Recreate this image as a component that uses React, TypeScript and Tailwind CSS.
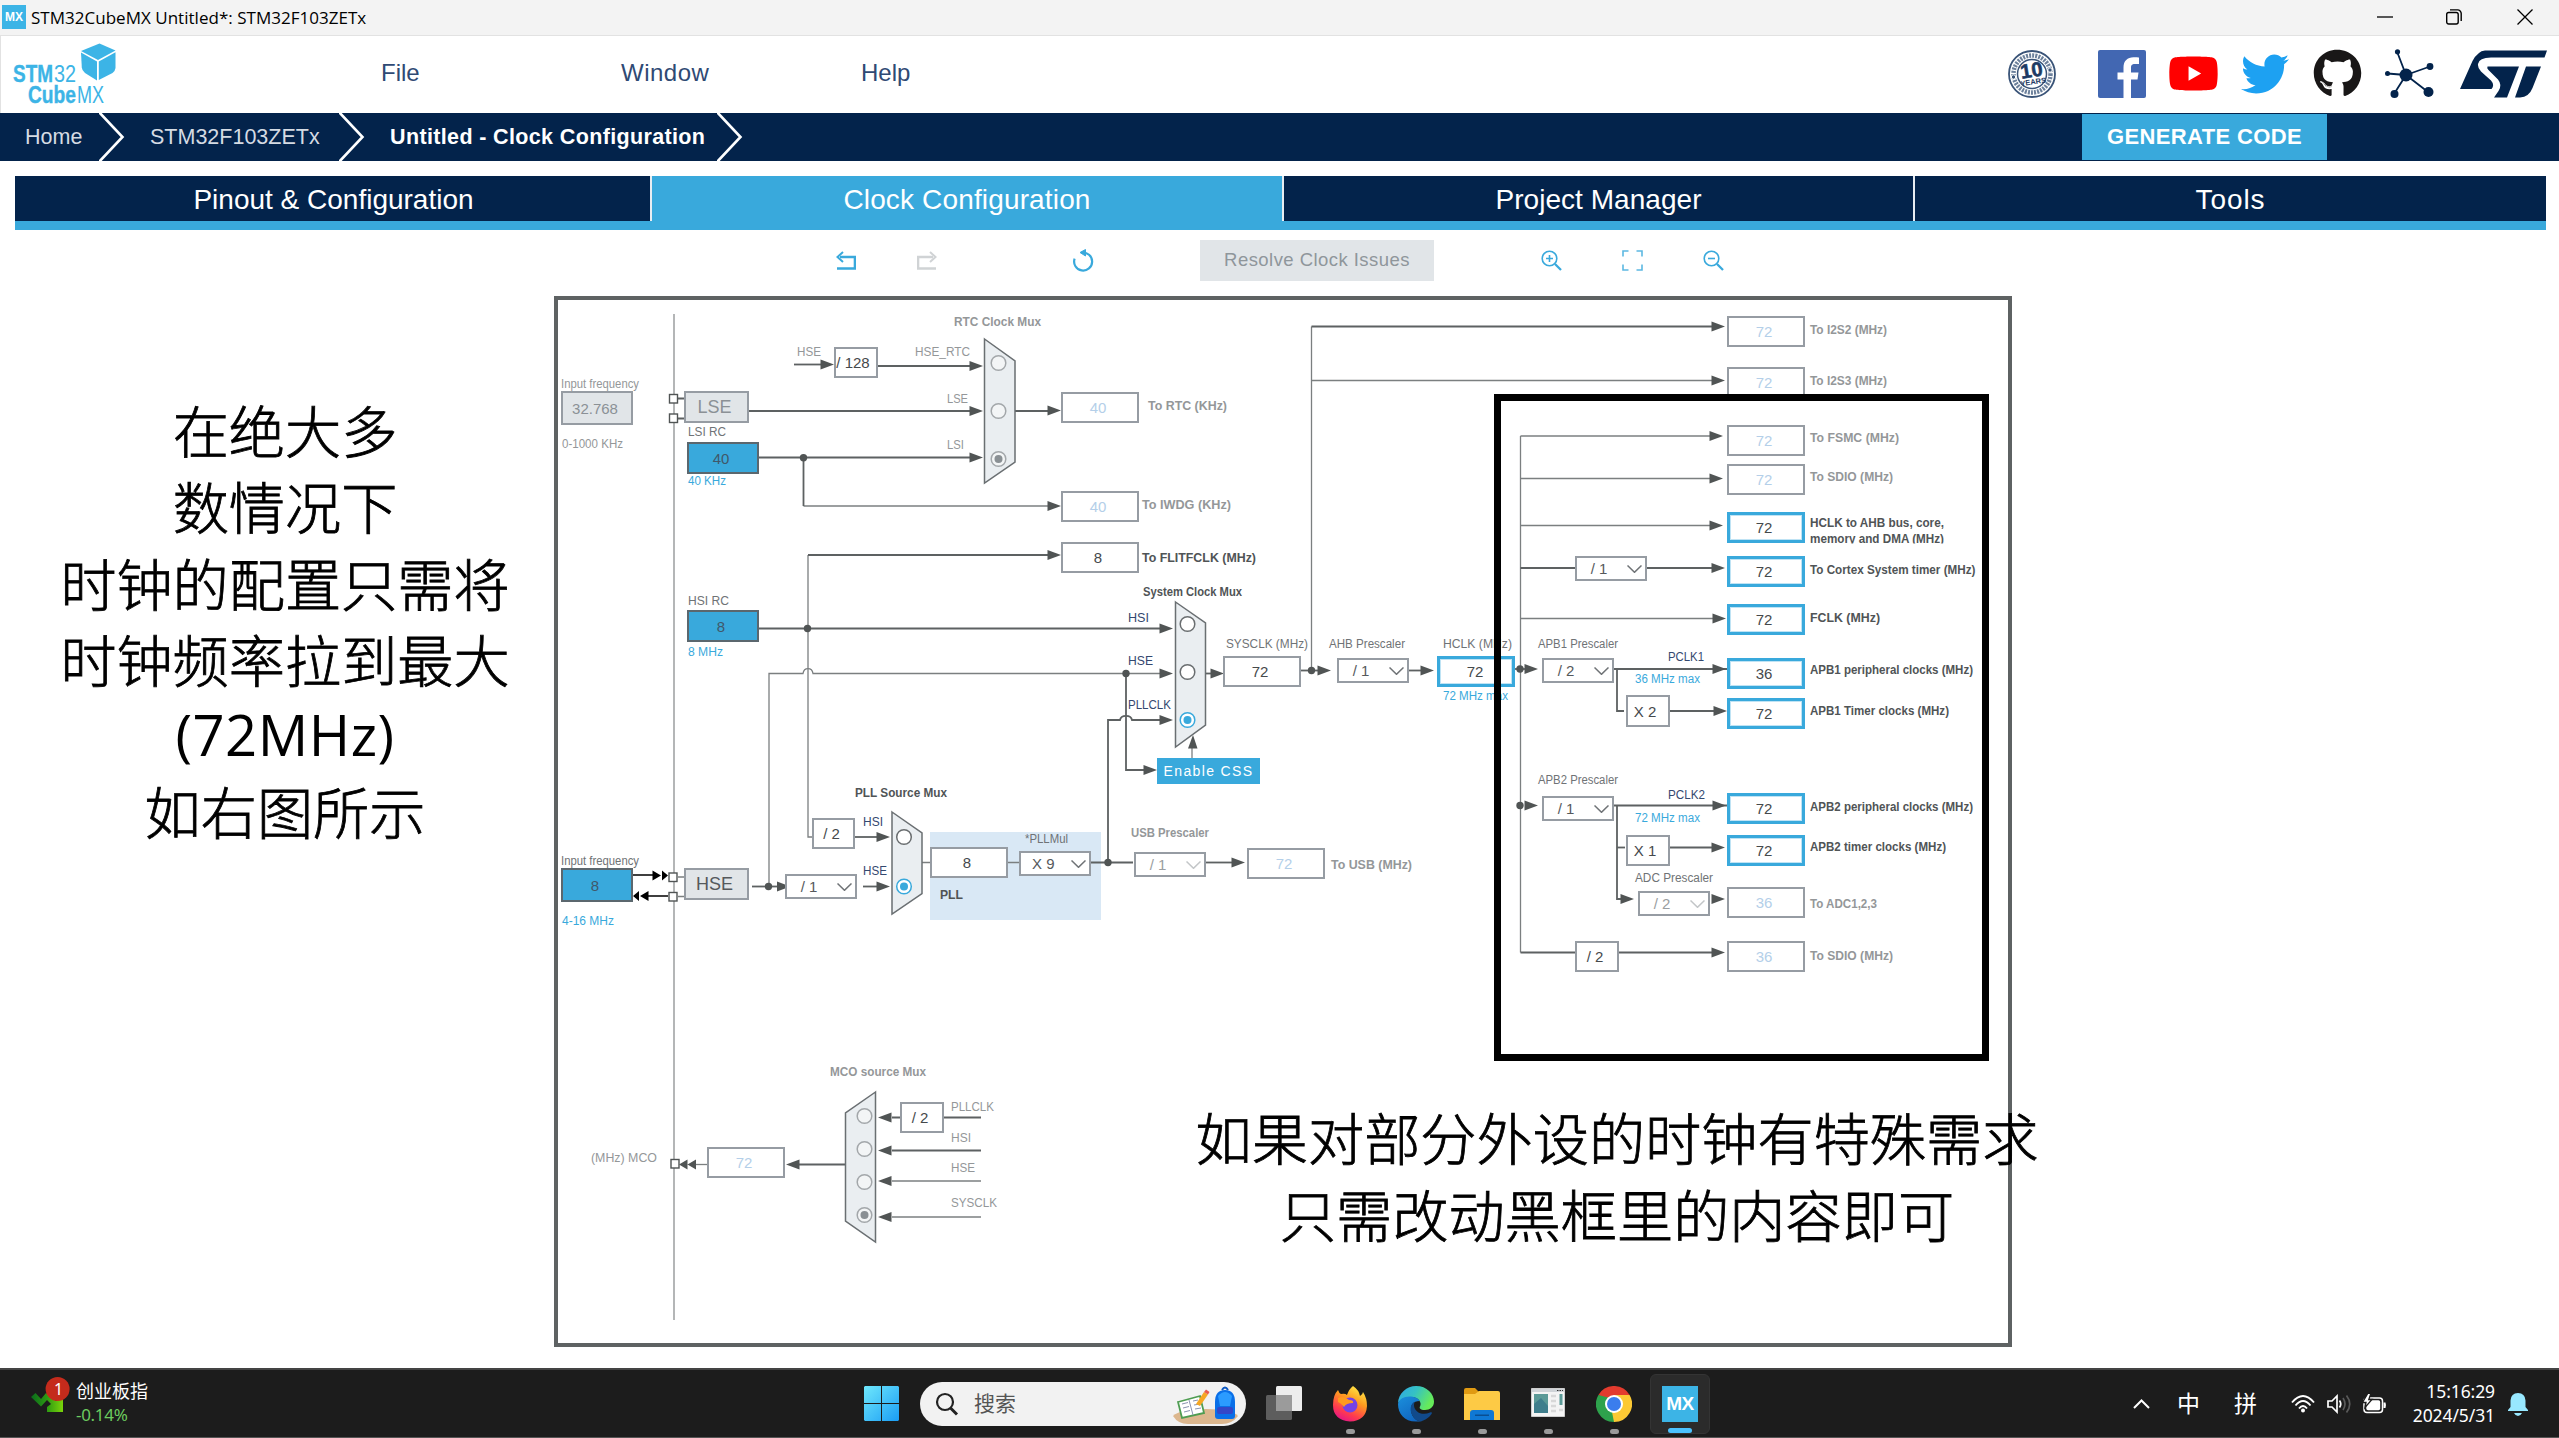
import React from "react";
import { FaGithub, FaTwitter, FaYoutube } from "react-icons/fa";

/* ------------------------------------------------------------------ */
/* Clock tree data (page coordinates, origin of the canvas below)      */
/* ------------------------------------------------------------------ */

const OX = 554;
const OY = 296;

type Tone = "dark" | "mid" | "grey" | "blue" | "navy";

const tones: Record<Tone, string> = {
  dark: "#505456",
  mid: "#6f7376",
  grey: "#949799",
  blue: "#39a9dc",
  navy: "#34486f",
};

type LabelDef = [text: string, x1: number, x2: number, baseline: number, tone: Tone, bold?: boolean];

const labels: LabelDef[] = [
  ["Input frequency", 561, 639, 388, "grey"],
  ["0-1000 KHz", 562, 623, 448, "grey"],
  ["LSI RC", 688, 726, 436, "mid"],
  ["40 KHz", 688, 726, 485, "blue"],
  ["RTC Clock Mux", 954, 1041, 326, "grey", true],
  ["HSE", 797, 821, 356, "grey"],
  ["HSE_RTC", 915, 970, 356, "grey"],
  ["LSE", 947, 968, 402.5, "grey"],
  ["LSI", 947, 964, 449, "grey"],
  ["To RTC (KHz)", 1148, 1227, 410, "grey", true],
  ["To IWDG (KHz)", 1142, 1231, 509, "grey", true],
  ["To FLITFCLK (MHz)", 1142, 1256, 561.5, "dark", true],
  ["HSI RC", 688, 729, 605, "mid"],
  ["8 MHz", 688, 723, 656, "blue"],
  ["System Clock Mux", 1143, 1242, 596, "dark", true],
  ["HSI", 1128, 1149, 621.5, "navy"],
  ["HSE", 1128, 1153, 665, "navy"],
  ["PLLCLK", 1128, 1171, 708.5, "navy"],
  ["SYSCLK (MHz)", 1226, 1308, 647.5, "mid"],
  ["AHB Prescaler", 1329, 1405, 647.5, "mid"],
  ["HCLK (MHz)", 1443, 1512, 647.5, "mid"],
  ["72 MHz max", 1443, 1508, 700, "blue"],
  ["USB Prescaler", 1131, 1209, 836.5, "grey", true],
  ["To USB (MHz)", 1331, 1412, 869, "grey", true],
  ["PLL Source Mux", 855, 947, 797, "dark", true],
  ["HSI", 863, 883, 825.5, "navy"],
  ["HSE", 863, 887, 875, "navy"],
  ["Input frequency", 561, 639, 865, "mid"],
  ["4-16 MHz", 562, 614, 925, "blue"],
  ["*PLLMul", 1025, 1068, 842.5, "mid"],
  ["PLL", 940, 963, 899, "dark", true],
  ["To I2S2 (MHz)", 1810, 1887, 334, "grey", true],
  ["To I2S3 (MHz)", 1810, 1887, 385, "grey", true],
  ["To FSMC (MHz)", 1810, 1899, 442, "grey", true],
  ["To SDIO (MHz)", 1810, 1893, 481, "grey", true],
  ["HCLK to AHB bus, core,", 1810, 1944, 527, "dark", true],
  ["To Cortex System timer (MHz)", 1810, 1975.5, 574, "dark", true],
  ["FCLK (MHz)", 1810, 1880, 622, "dark", true],
  ["APB1 Prescaler", 1538, 1618, 647.5, "mid"],
  ["PCLK1", 1668, 1704, 660.5, "navy"],
  ["36 MHz max", 1635, 1700, 683, "blue"],
  ["APB1 peripheral clocks (MHz)", 1810, 1973, 674, "dark", true],
  ["APB1 Timer clocks (MHz)", 1810, 1949, 714.5, "dark", true],
  ["APB2 Prescaler", 1538, 1618, 784, "mid"],
  ["PCLK2", 1668, 1705, 798.5, "navy"],
  ["72 MHz max", 1635, 1700, 821.5, "blue"],
  ["APB2 peripheral clocks (MHz)", 1810, 1973, 811, "dark", true],
  ["APB2 timer clocks (MHz)", 1810, 1946, 851, "dark", true],
  ["ADC Prescaler", 1635, 1713, 881.5, "mid"],
  ["To ADC1,2,3", 1810, 1877, 908, "grey", true],
  ["To SDIO (MHz)", 1810, 1893, 959.5, "grey", true],
  ["MCO source Mux", 830, 926, 1076, "grey", true],
  ["PLLCLK", 951, 994, 1111, "grey"],
  ["HSI", 951, 971, 1142, "grey"],
  ["HSE", 951, 975, 1172, "grey"],
  ["SYSCLK", 951, 997, 1207, "grey"],
  ["(MHz) MCO", 591, 657, 1162, "grey"],
];

type BoxKind = "plain" | "off" | "active" | "source" | "disabled" | "enabled";
type BoxDef = { t: string; x: number; y: number; w: number; h: number; kind: BoxKind; dx?: number; big?: boolean };

const out = (t: string, x: number, y: number, kind: BoxKind, dx = 0): BoxDef => ({ t, x, y, w: 78, h: 31, kind, dx });

const boxes: BoxDef[] = [
  { t: "32.768", x: 561, y: 391, w: 72, h: 34, kind: "disabled", dx: -2 },
  { t: "LSE", x: 684, y: 391, w: 65, h: 32, kind: "disabled", big: true, dx: -2 },
  { t: "40", x: 687, y: 442, w: 72, h: 32, kind: "source", dx: -2 },
  { t: "8", x: 687, y: 610, w: 72, h: 32, kind: "source", dx: -2 },
  { t: "8", x: 561, y: 868, w: 72, h: 34, kind: "source", dx: -2 },
  { t: "HSE", x: 684, y: 868, w: 65, h: 32, kind: "enabled", big: true, dx: -2 },
  { t: "/ 128", x: 834, y: 347, w: 44, h: 31, kind: "plain", dx: -3 },
  out("40", 1061, 392, "off", -2),
  out("40", 1061, 491, "off", -2),
  out("8", 1061, 542, "plain", -2),
  out("72", 1223, 656, "plain", -2),
  out("72", 1437, 656, "active", -1),
  out("72", 1247, 848, "off", -2),
  { t: "/ 2", x: 812, y: 818, w: 43, h: 31, kind: "plain", dx: -2 },
  out("8", 930, 847, "plain", -2),
  out("72", 1727, 316, "off", -2),
  out("72", 1727, 367, "off", -2),
  out("72", 1727, 425, "off", -2),
  out("72", 1727, 464, "off", -2),
  out("72", 1727, 512, "active", -2),
  out("72", 1727, 556, "active", -2),
  out("72", 1727, 604, "active", -2),
  out("36", 1727, 658, "active", -2),
  out("72", 1727, 698, "active", -2),
  out("72", 1727, 793, "active", -2),
  out("72", 1727, 835, "active", -2),
  out("36", 1727, 887, "off", -2),
  out("36", 1727, 941, "off", -2),
  { t: "X 2", x: 1626, y: 695, w: 44, h: 32, kind: "plain", dx: -3 },
  { t: "X 1", x: 1626, y: 835, w: 44, h: 31, kind: "plain", dx: -3 },
  { t: "/ 2", x: 1575, y: 941, w: 44, h: 31, kind: "plain", dx: -2 },
  { t: "/ 2", x: 900, y: 1102, w: 44, h: 31, kind: "plain", dx: -2 },
  out("72", 707, 1147, "off", -2),
];

const boxKinds: Record<BoxKind, string> = {
  plain: "border-2 border-[#969ca3] bg-white text-[#45494c]",
  off: "border-2 border-[#969ca3] bg-white text-[#b4cfe9]",
  active: "border-[3px] border-[#39a9dc] bg-white text-[#45494c] shadow-[inset_0_0_0_1px_#bfe3f4]",
  source: "border-2 border-[#5b676e] bg-[#39a9dc] text-[#40586a]",
  disabled: "border-2 border-[#969ca3] bg-[#e1e5e8] text-[#8b9196]",
  enabled: "border-2 border-[#969ca3] bg-[#e1e5e8] text-[#55595c]",
};

type SelectDef = [text: string, x: number, y: number, dim?: boolean];
const selects: SelectDef[] = [
  ["/ 1", 1337, 658],
  ["/ 1", 1134, 852, true],
  ["/ 1", 785, 874],
  ["X 9", 1019, 851],
  ["/ 1", 1575, 556],
  ["/ 2", 1542, 658],
  ["/ 1", 1542, 796],
  ["/ 2", 1638, 891, true],
];

const darkWires = [
  "M794 364.5H822",
  "M878 366H972",
  "M749 411H972",
  "M759 457.5H972",
  "M803.5 457.5V506",
  "M1015 411H1049",
  "M808 555H1053",
  "M759 628.5H1162",
  "M1108 862V720H1120C1121 714.500 1131 714.500 1132 720H1160",
  "M1126 673.500V770H1147",
  "M1205 673.500H1215",
  "M1409 670.500H1422",
  "M1058 862.500H1133",
  "M1206 862.500H1232",
  "M855 837H878",
  "M863 886.500H878",
  "M752 886.500H778",
  "M1311.500 326.500H1712",
  "M1520.500 568H1712",
  "M1614 669H1727",
  "M1614 805.500H1727",
  "M1617 669V711H1624",
  "M1617 805.500V899H1622",
  "M1617 847.500H1625",
  "M1669 711H1714",
  "M1669 847.500H1712",
  "M1520.500 952.500H1714",
  "M892 1117.500H981",
  "M892 1150.500H981",
  "M845 1164.500H798",
  "M1301 670.500H1318",
  "M1515 669H1526",
  "M678 398.500H684M678 418.500H684",
];

const lightWires = [
  "M803.5 506H1049",
  "M808 555V837H813",
  "M769 886.500V673.500H803C804 667 812 667 813 673.500H1162",
  "M1311.500 326.500V670",
  "M1311.500 380.500H1712",
  "M1520.500 436V952.500",
  "M1520.500 436H1712",
  "M1520.500 478.500H1712",
  "M1520.500 525.500H1712",
  "M1520.500 618.500H1714",
  "M892 1181H981",
  "M892 1217H981",
  "M707 1164.500H696",
  "M922 862.500H930M1008 862.500H1019",
  "M678 877H684M678 896.500H684",
  "M1192 758V746",
];

const rightArrows: [number, number][] = [
  [834, 364.5], [983, 366], [983, 411], [983, 457.5], [1061, 410.5], [1061, 506], [1061, 555],
  [1173, 628.5], [1173, 673.5], [1173, 720], [1157, 770], [1224, 673.5], [1331, 670.5], [1434, 670.5],
  [1245, 862.5], [890, 837], [890, 886.5], [1538, 669], [1538, 805.5],
  [1725, 326.5], [1725, 380.5], [1723, 436], [1723, 478.5], [1723, 525.5], [1725, 568], [1726, 618.5],
  [1726, 669], [1727, 711], [1726, 805.5], [1725, 847.5], [1725, 899], [1725, 952.5], [1634, 899],
];
const leftArrows: [number, number][] = [
  [878, 1117.5], [878, 1150.5], [878, 1181], [878, 1217], [786, 1164.5],
];
const dots: [number, number][] = [
  [803.5, 457.7], [807.5, 628.5], [1126, 673.5], [1311.5, 670.5], [1520, 669], [1520, 805.5],
  [1108, 862.5], [768.5, 886.5],
];

const muxes = [
  "984.5,339 1015,361 1015,462 984.5,483",
  "1175.5,602 1205.5,623 1205.5,725 1175.5,747",
  "892,812 922,833 922,893.5 892,914",
  "875.5,1092 845.5,1113 845.5,1221 875.5,1242",
];

type RadioDef = [x: number, y: number, state: "free" | "off" | "on" | "offset"];
const radios: RadioDef[] = [
  [998.5, 363, "off"], [998.5, 411, "off"], [998.5, 459, "offset"],
  [1187.5, 624, "free"], [1187.5, 672, "free"], [1187.5, 720, "on"],
  [904, 837, "free"], [904, 886.5, "on"],
  [864.5, 1116, "off"], [864.5, 1149, "off"], [864.5, 1182, "off"], [864.5, 1215, "offset"],
];

const pins: [number, number][] = [[669.5, 394.5], [669.5, 414], [669, 873], [669, 892.5], [671, 1159.5]];

function Wires() {
  return (
    <svg
      className="absolute inset-0 h-full w-full font-['Liberation_Sans',Arial,sans-serif]"
      viewBox="554 296 1458 1051"
    >
      <rect x="930" y="832" width="171" height="88" fill="#d9e8f5" />
      <path d="M674 314V1320" stroke="#b4b6b7" strokeWidth="2" />
      <g fill="none" strokeWidth="1.3" stroke="#7b7f80">
        {lightWires.map((d) => <path key={d} d={d} />)}
      </g>
      <g fill="none" strokeWidth="1.8" stroke="#5d6162">
        {darkWires.map((d) => <path key={d} d={d} />)}
      </g>
      <g fill="#505454">
        {rightArrows.map(([x, y]) => <path key={`${x}-${y}`} d={`M${x} ${y}l-13.500 -5v10z`} />)}
        {leftArrows.map(([x, y]) => <path key={`${x}-${y}`} d={`M${x} ${y}l13.500 -5v10z`} />)}
        <path d="M785 884.500v4l-8 3v-10z" />
        <path d="M1193 735l-5 13.500h9.500z" />
        <path d="M679 1164.500l8.500 -5v10zM687.500 1164.500l8.500 -5v10z" />
        {dots.map(([x, y]) => <circle key={`${x}-${y}`} cx={x} cy={y} r="3.700" />)}
      </g>
      <g fill="#000">
        <path d="M661 875.500l-8.500 -5v10zM668 875.500l-6 -5v10zM640 896l8.500 -5v10zM633 896l6 -5v10z" />
        <path d="M633 875H655M645 896H668" stroke="#000" strokeWidth="1.500" />
      </g>
      {muxes.map((p) => <polygon key={p} points={p} fill="#eaeef1" stroke="#6a6f72" strokeWidth="1.500" />)}
      {radios.map(([x, y, s]) => (
        <g key={`${x}-${y}`}>
          <circle
            cx={x} cy={y} r="7.300"
            fill={s === "off" || s === "offset" ? "#f3f5f6" : "#fff"}
            stroke={s === "on" ? "#39a9dc" : s === "free" ? "#6a6e70" : "#a3a7aa"}
            strokeWidth="1.500"
          />
          {(s === "on" || s === "offset") && <circle cx={x} cy={y} r="4" fill={s === "on" ? "#39a9dc" : "#8a9094"} />}
        </g>
      ))}
      {pins.map(([x, y]) => (
        <rect key={`${x}-${y}`} x={x} y={y} width="8" height="8.500" fill="#fff" stroke="#505454" strokeWidth="1.400" />
      ))}
      {labels.map(([t, x1, x2, y, tone, bold]) => (
        <text
          key={`${t}-${x1}-${y}`} x={x1} y={y} textLength={x2 - x1} lengthAdjust="spacingAndGlyphs"
          fontSize="12" fontWeight={bold ? 700 : 400} fill={tones[tone]}
        >
          {t}
        </text>
      ))}
      <clipPath id="descriptionClip"><rect x="1800" y="530" width="180" height="13.500" /></clipPath>
      <text
        x="1810" y="543" textLength="134" lengthAdjust="spacingAndGlyphs" fontSize="12" fontWeight={700}
        fill={tones.dark} clipPath="url(#descriptionClip)"
      >
        memory and DMA (MHz)
      </text>
    </svg>
  );
}

function Box({ t, x, y, w, h, kind, dx = 0, big }: BoxDef) {
  return (
    <div
      className={`absolute flex items-center justify-center whitespace-nowrap leading-none ${big ? "text-[18px]" : "text-[15px]"} ${boxKinds[kind]}`}
      style={{ left: x - OX, top: y - OY, width: w, height: h }}
    >
      <span className="relative" style={{ left: dx }}>{t}</span>
    </div>
  );
}

function Select({ t, x, y, dim }: { t: string; x: number; y: number; dim?: boolean }) {
  return (
    <div
      className={`absolute flex h-[25px] w-[72px] items-center justify-between border-2 border-[#969ca3] bg-white pl-[11px] pr-[3px] text-[15px] leading-none ${dim ? "text-[#9a9ea1]" : "text-[#55595c]"}`}
      style={{ left: x - OX, top: y - OY }}
    >
      <span className="min-w-[22px] text-center">{t}</span>
      <svg className="h-2 w-[15px]" viewBox="0 0 15 8" fill="none" stroke={dim ? "#c3c6c8" : "#6f7376"} strokeWidth="1.500">
        <path d="M.500 .500L7.500 7.300L14.500 .500" />
      </svg>
    </div>
  );
}

function ClockTree() {
  return (
    <div className="relative h-[1051px] w-[1458px] shrink-0 bg-white font-['Liberation_Sans',Arial,sans-serif]">
      <Wires />
      {boxes.map((b) => <Box key={`${b.x}-${b.y}`} {...b} />)}
      {selects.map(([t, x, y, dim]) => <Select key={`${x}-${y}`} t={t} x={x} y={y} dim={dim} />)}
      <button className="absolute left-[603px] top-[462px] h-[26px] w-[103px] bg-[#39a9dc] text-[14px] leading-none tracking-[1.350px] text-white">
        Enable CSS
      </button>
      <div className="absolute inset-0 border-[4px] border-[#5e6263]" />
      <div className="absolute left-[940px] top-[98px] h-[667px] w-[495px] border-[7px] border-black" />
      <div className="absolute left-[563px] top-[801px] w-[1000px] text-center font-['Noto_Sans_CJK_SC',sans-serif] text-[56.200px] font-light leading-[77px] text-black [-webkit-text-stroke:0.8px_black]">
        <p>如果对部分外设的时钟有特殊需求</p>
        <p>只需改动黑框里的内容即可</p>
      </div>
    </div>
  );
}

/* ------------------------------------------------------------------ */
/* Window chrome                                                       */
/* ------------------------------------------------------------------ */

function TitleBar() {
  return (
    <div className="flex h-9 items-center border-b border-[#e2e2e2] bg-[#f3f3f3] pl-[2px]">
      <div className="mb-[2px] flex size-6 items-center justify-center bg-[#3cb4e6] text-[12px] font-bold leading-none text-white">
        MX
      </div>
      <span className="ml-[5px] font-['Open_Sans',sans-serif] text-[17px] leading-none tracking-[0.020px] text-black">
        STM32CubeMX Untitled*: STM32F103ZETx
      </span>
      <div className="ml-auto mb-[2px] flex items-center pr-[26px]">
        <svg className="size-[16px]" viewBox="0 0 16 16" stroke="#000" strokeWidth="1.300"><path d="M0 8H16" /></svg>
        <svg className="ml-[53px] size-[16px]" viewBox="0 0 16 16" fill="none" stroke="#000" strokeWidth="1.400">
          <rect x=".7" y="3.500" width="11.500" height="11.500" rx="2" />
          <path d="M4 .900H11.500A3.500 3.500 0 0 1 15.200 4.500V12" />
        </svg>
        <svg className="ml-[55px] size-[16px]" viewBox="0 0 16 16" stroke="#000" strokeWidth="1.300"><path d="M.500 .500L15.500 15.500M15.500 .500L.500 15.500" /></svg>
      </div>
    </div>
  );
}

function CubeLogo() {
  return (
    <svg className="h-[74px] w-[106px]" viewBox="12 37.500 106 74" fill="#3cb4e6">
      <path d="M81 51.500L99.500 44L115.500 51L98 60.500Z" />
      <path d="M81 53L97 62V81L85 73.500Q82 71 81.800 68Z" />
      <path d="M98.800 62L115.500 52.800V68.500Q115 72 112.500 73.500L98.800 80.500Z" />
      <g fontFamily="Liberation Sans, Arial, sans-serif" fontSize="24">
        <text x="13" y="82.700" fontWeight="700" textLength="40" lengthAdjust="spacingAndGlyphs" stroke="#3cb4e6" strokeWidth=".4">STM</text>
        <text x="54" y="82.700" textLength="22" lengthAdjust="spacingAndGlyphs">32</text>
        <text x="28" y="103.500" fontWeight="700" textLength="48" lengthAdjust="spacingAndGlyphs" stroke="#3cb4e6" strokeWidth=".4">Cube</text>
        <text x="77" y="103.500" textLength="27" lengthAdjust="spacingAndGlyphs">MX</text>
      </g>
    </svg>
  );
}

function YearsBadge() {
  return (
    <svg className="size-[48px]" viewBox="0 0 48 48">
      <circle cx="24" cy="24" r="23" fill="#fff" stroke="#3a5478" strokeWidth="1.800" />
      <circle cx="24" cy="24" r="18.500" fill="none" stroke="#6c809b" strokeWidth="4.500" strokeDasharray="2 1.100" />
      <circle cx="24" cy="24" r="14.500" fill="#fff" stroke="#3a5478" strokeWidth="1.500" />
      <circle cx="5.500" cy="27" r="2.200" fill="#3a5478" stroke="#fff" />
      <circle cx="42" cy="20" r="2.200" fill="#3a5478" stroke="#fff" />
      <g transform="rotate(-9 24 24)" fill="#1d3a63" fontFamily="Liberation Sans, Arial, sans-serif" fontWeight="700" textAnchor="middle">
        <text x="24" y="27" fontSize="20" stroke="#1d3a63" strokeWidth=".6">10</text>
        <text x="24" y="34.500" fontSize="7.500">YEARS</text>
      </g>
    </svg>
  );
}

function Header() {
  return (
    <header className="flex h-[77px] items-center border-l border-[#e2e2e2] bg-white pb-[2px] pl-[11px]">
      <CubeLogo />
      <nav className="mb-px ml-[263px] flex items-center text-[24px] leading-none text-[#2f4a74]">
        <span className="w-[240px]">File</span>
        <span className="w-[240px] tracking-[0.500px]">Window</span>
        <span>Help</span>
      </nav>
      <div className="ml-auto flex items-center pr-[11px]">
        <YearsBadge />
        <svg className="ml-[42px] size-[48px]" viewBox="0 0 48 48">
          <rect width="48" height="48" rx="2" fill="#4267b2" />
          <path fill="#fff" d="M25.500 48V29.500H19.500V22.500H25.500V17.500C25.500 11 29.500 7.300 35.500 7.300C38 7.300 40.500 7.500 41 7.600V14H37C33.500 14 33 15.600 33 18V22.500H40.500L39.500 29.500H33V48Z" />
        </svg>
        <FaYoutube className="ml-[22px]" size={51} color="#ff0000" />
        <FaTwitter className="ml-[22px]" size={48} color="#1da1f2" />
        <FaGithub className="ml-[24px]" size={49} color="#191717" />
        <svg className="ml-[23px] size-[49px]" viewBox="0 0 49 49" fill="#03234b" stroke="#03234b" strokeWidth="1.800">
          <path d="M21 26L12 2.500M21 26L2.500 24.500M21 26L45 17.500M21 26L43 43M21 26L9 45" />
          <g stroke="none">
            <circle cx="21" cy="26" r="6.500" /><circle cx="12.500" cy="2.800" r="2.600" /><circle cx="2.500" cy="24.500" r="2.500" />
            <circle cx="45" cy="17.500" r="3.400" /><circle cx="43.500" cy="43" r="5" /><circle cx="9.500" cy="45" r="4" />
          </g>
        </svg>
        <svg className="ml-[26px] h-[48px] w-[88px]" viewBox="0 0 88 48" fill="#03234b">
          <path d="M19 3Q21 .500 25 .500H87L84.500 7.500H31Q19 7.500 18 14Q17.500 18 21 21.500L31 30.500Q35 35 31.500 39H0L12.500 11Q15 6 19 3Z" />
          <path d="M27.500 16.500H59L47 47.500H34L38.500 41Q42.500 35 38 29.500L28.500 20Q26.500 18 27.500 16.500Z" />
          <path d="M66 16.500H81L72.500 38Q69 47 60 47.500H55Z" />
        </svg>
      </div>
    </header>
  );
}

function Chevron() {
  return (
    <svg className="h-12 w-[27px] shrink-0" viewBox="0 0 27 48" fill="none" stroke="#fff" strokeWidth="2.600">
      <path d="M0 -1L23.500 24L0 49" />
    </svg>
  );
}

function Breadcrumb() {
  return (
    <div className="flex h-12 items-center bg-[#03234b] text-[21.500px] leading-none text-[#d5dbe3]">
      <span className="w-[99px] pl-[25px] pt-[2px]">Home</span>
      <Chevron />
      <span className="w-[213px] pl-[24px] pt-[2px]">STM32F103ZETx</span>
      <Chevron />
      <span className="w-[351px] whitespace-nowrap pl-[24px] pt-[2px] font-bold tracking-[0.360px] text-white">
        Untitled - Clock Configuration
      </span>
      <Chevron />
      <button className="ml-auto mr-[232px] h-[46px] w-[245px] bg-[#39a9dc] text-[22px] font-bold tracking-[0.350px] text-white">
        GENERATE CODE
      </button>
    </div>
  );
}

function Tabs() {
  const tab = "flex h-[45px] items-center justify-center pt-[2px] text-[28px] leading-none text-white";
  return (
    <div className="ml-[15px] mr-[13px] mt-[15px] grid grid-cols-[637px_632px_631px_631px] border-b-[9px] border-[#39a9dc]">
      <div className={`${tab} border-r-2 border-[#e8edf2] bg-[#03234b] pl-[2px]`}>Pinout &amp; Configuration</div>
      <div className={`${tab} border-r-2 border-[#e8edf2] bg-[#39a9dc] tracking-[0.150px]`}>Clock Configuration</div>
      <div className={`${tab} border-r-2 border-[#e8edf2] bg-[#03234b] tracking-[0.050px]`}>Project Manager</div>
      <div className={`${tab} bg-[#03234b] tracking-[0.900px]`}>Tools</div>
    </div>
  );
}

function Toolbar() {
  return (
    <div className="flex h-[66px] items-center pb-[5px] pl-[836px]">
      <svg className="size-[20px]" viewBox="0 0 20 20" fill="none" stroke="#39a9dc" strokeWidth="2.600">
        <path d="M1 17.500H19V6H4" /><path d="M7 1L1.500 6L7 11" strokeWidth="2" />
      </svg>
      <svg className="ml-[61px] size-[20px]" viewBox="0 0 20 20" fill="none" stroke="#d0d3d5" strokeWidth="2.600">
        <path d="M19 17.500H1V6H16" /><path d="M13 1L18.500 6L13 11" strokeWidth="2" />
      </svg>
      <svg className="ml-[135px] size-[23px]" viewBox="0 0 23 23" fill="none" stroke="#39a9dc" strokeWidth="2.200">
        <path d="M11 3.500A9 9 0 1 1 3 8.500" transform="rotate(-8 11.500 12)" /><path d="M8 3.500L13.500 .500V7Z" fill="#39a9dc" strokeWidth="1" />
      </svg>
      <button className="ml-[105px] h-[41px] w-[234px] bg-[#e1e5e8] text-[18.500px] leading-none tracking-[0.450px] text-[#8f969b]">
        Resolve Clock Issues
      </button>
      <svg className="ml-[107px] size-[21px]" viewBox="0 0 21 21" fill="none" stroke="#39a9dc" strokeWidth="1.600">
        <circle cx="8.500" cy="8.500" r="7.300" /><path d="M14 14L20 20" strokeWidth="2.300" /><path d="M8.500 5V12M5 8.500H12" />
      </svg>
      <svg className="ml-[60px] size-[21px]" viewBox="0 0 21 21" fill="none" stroke="#5cb8e2" strokeWidth="1.600">
        <path d="M1 6.500V1H6.500M14.500 1H20V6.500M20 14.500V20H14.500M6.500 20H1V14.500" />
      </svg>
      <svg className="ml-[60px] size-[21px]" viewBox="0 0 21 21" fill="none" stroke="#39a9dc" strokeWidth="1.600">
        <circle cx="8.500" cy="8.500" r="7.300" /><path d="M14 14L20 20" strokeWidth="2.300" /><path d="M5 8.500H12" />
      </svg>
    </div>
  );
}

/* ------------------------------------------------------------------ */
/* Taskbar                                                             */
/* ------------------------------------------------------------------ */

function TaskApp({ children, active }: { children: React.ReactNode; active?: boolean }) {
  return (
    <div className={`relative flex h-[60px] w-[60px] items-center justify-center rounded-md ${active ? "border border-[#343434] bg-[#2b2b2b]" : ""}`}>
      {children}
      <span className={`absolute bottom-0 h-[5px] rounded-full ${active ? "w-6 bg-[#4cc2ff]" : "w-[9px] bg-[#9a9a9a]"}`} />
    </div>
  );
}

function Taskbar() {
  return (
    <footer className="flex h-[70px] items-center border-b border-t-2 border-b-[#555] border-t-[#444] bg-[#1c1c1c] font-['Noto_Sans','Noto_Sans_CJK_SC',sans-serif] text-white">
      <div className="flex w-[864px] items-center pl-[30px]">
        <svg className="mb-[20px] h-[38px] w-[42px]" viewBox="30 1375 42 38">
          <defs>
            <linearGradient id="trend" x1="0" x2="1"><stop offset="0" stopColor="#0a6b1c" /><stop offset=".5" stopColor="#2d9a12" /><stop offset="1" stopColor="#7bd40a" /></linearGradient>
          </defs>
          <path d="M31 1397L35.500 1393L41 1399L46 1393L56 1401L63 1396V1412H47V1407L51 1404L47 1400L41 1406.500Z" fill="url(#trend)" />
          <circle cx="57.600" cy="1389" r="12" fill="#c42b1c" />
          <text x="58.500" y="1395" fontSize="16" fill="#fff" textAnchor="middle">1</text>
        </svg>
        <div className="mb-[2px] ml-[4px] flex flex-col text-[18px] leading-[24px]">
          <span>创业板指</span>
          <span className="text-[17px] tracking-[-0.300px] text-[#6ccb5f]">-0.14%</span>
        </div>
      </div>
      <svg className="size-[35px]" viewBox="0 0 35 35">
        <defs><linearGradient id="win" x1="0" y1="0" x2="1" y2="1" gradientUnits="objectBoundingBox"><stop offset="0" stopColor="#6fe8fc" /><stop offset="1" stopColor="#1a9df5" /></linearGradient></defs>
        <path fill="url(#win)" d="M1 0H17V17H0V1ZM18 0H34L35 1V17H18ZM0 18H17V35H1L0 34ZM18 18H35V34L34 35H18Z" />
      </svg>
      <div className="ml-[21px] flex h-[44px] w-[326px] items-center overflow-hidden rounded-full bg-[#f2f2f2] pl-[15px]">
        <svg className="size-[24px]" viewBox="0 0 24 24" fill="none" stroke="#222" strokeWidth="2.200">
          <circle cx="10" cy="10" r="8" /><path d="M15.500 16L22 22.500" strokeWidth="3" />
        </svg>
        <span className="ml-[15px] text-[21px] leading-none text-[#555]">搜索</span>
        <svg className="ml-auto mr-[6px] h-[44px] w-[68px]" viewBox="0 0 68 44">
          <path d="M1 34Q8 27 34 27T66 34Q60 42 50 42H16Q6 42 1 34Z" fill="#dcb78e" />
          <path d="M6 20L28 14L32 31L10 36Z" fill="#fff" stroke="#4f9d52" strokeWidth="1.800" />
          <path d="M17 18L21 33M10 22L16 20.500M11 26L17 24.500M12 30L18 28.500M21 19L26 18M22 23L28 22M23 27L29 26" stroke="#8a93b0" strokeWidth="1" />
          <path d="M24 22L32 10L36 12.500L28 24Z" fill="#f6a723" /><path d="M32 10L34 7.500L37.500 10L36 12.500Z" fill="#ea5b4c" />
          <path d="M43 20Q43 8 53 8T63 20V34Q63 37 60 37H46Q43 37 43 34Z" fill="#0a6fe8" />
          <path d="M46 14Q53 6 60 14L58 24H48Z" fill="#2b9bff" />
          <rect x="45" y="25" width="16" height="7" rx="2" fill="#3347c8" />
          <path d="M50 8Q53 3 56 8" stroke="#0a57c2" strokeWidth="2" fill="none" />
        </svg>
      </div>
      <svg className="ml-[20px] h-[35px] w-[36px]" viewBox="0 0 36 35">
        <rect x="10" y="0" width="26" height="25" rx="1.500" fill="#ededed" />
        <rect x="0" y="9" width="26" height="25" rx="1.500" fill="#5d5d5d" />
        <rect x="10" y="9" width="16" height="16" fill="#9b9b9b" />
      </svg>
      <div className="ml-[18px] flex gap-[6px]">
        <TaskApp>
          <svg className="size-[36px]" viewBox="0 0 36 36">
            <defs>
              <linearGradient id="ff" x1=".8" y1="0" x2=".3" y2="1"><stop offset="0" stopColor="#fff04a" /><stop offset=".4" stopColor="#ff9a1f" /><stop offset=".75" stopColor="#ff3b4e" /><stop offset="1" stopColor="#e31587" /></linearGradient>
            </defs>
            <path fill="url(#ff)" d="M21 0Q27 4 28 10Q31 8 31 6Q35 12 35 20Q34 35 18 35.500Q1 34 1 19Q1 9 6 4Q7 7 9 8Q13 7 15 9Q17 3 21 0Z" />
            <circle cx="18" cy="19" r="7.500" fill="#7542e5" />
            <path d="M6 12Q12 9 17 14Q22 14 21 17Q14 17 12 21Q9 17 6 16Z" fill="#ff9a1f" />
          </svg>
        </TaskApp>
        <TaskApp>
          <svg className="size-[36px]" viewBox="0 0 36 36">
            <defs>
              <linearGradient id="edgeTop" x1="0" y1="0" x2="1" y2=".4"><stop offset="0" stopColor="#2fa7e8" /><stop offset=".5" stopColor="#35c1c4" /><stop offset="1" stopColor="#66eb5a" /></linearGradient>
              <linearGradient id="edgeLow" x1="0" y1="0" x2=".6" y2="1"><stop offset="0" stopColor="#1b8fdc" /><stop offset="1" stopColor="#1066c0" /></linearGradient>
            </defs>
            <path fill="url(#edgeTop)" d="M0 18C0 7 9 0 18 0C29 0 36 8 36 15.500C36 21 32 24 27 24C22 24 21 22 22 20.500C24 17 21 11 13 11C6 11 1 14 0 18Z" />
            <path fill="url(#edgeLow)" d="M0 18C1 13 6 10 13 10.500C18 11 21 13 21.500 15C15 15 13 19 13 23C13 30 18 36 24 35C8 38 0 29 0 18Z" />
            <path fill="#114a8b" d="M17 15.500C13 18 12 22 13 26C15 33 20 36 24 35C29 33.500 32.500 30 34 27C34 26 33 26 32 26.500C24 30 16 26 16 19C16 17.500 16.500 16 17 15.500Z" />
          </svg>
        </TaskApp>
        <TaskApp>
          <svg className="size-[36px]" viewBox="0 0 36 36">
            <path d="M0 4Q0 2 2 2H11L15 6H34V14H0Z" fill="#e09a12" />
            <path d="M0 8H11L15 5H34Q36 5 36 7V34H0Z" fill="#fdca45" />
            <path d="M6 34V27Q6 24 9 24H27Q30 24 30 27V34Z" fill="#0f78d4" />
            <rect x="11" y="28.500" width="14" height="1.500" fill="#0a4e91" />
          </svg>
        </TaskApp>
        <TaskApp>
          <svg className="mb-[2px] h-[29px] w-[34px]" viewBox="0 0 34 29">
            <rect width="34" height="29" rx="1" fill="#f4f4f4" stroke="#a5a5a5" />
            <rect x="1" y="1" width="32" height="3" fill="#d0d4d8" />
            <path d="M26 2.500H32" stroke="#333" strokeDasharray="1.500 1" />
            <rect x="3" y="6" width="14" height="19" fill="#5b9a97" /><path d="M3 16L10 10L17 18V25H3Z" fill="#3f7e8c" />
            <path d="M20 8H25M20 13H25M20 18H25M20 23H25M28 22H32" stroke="#d8d8d8" strokeWidth="2.500" /><rect x="28.500" y="6" width="3" height="11" fill="#5b9a97" />
          </svg>
        </TaskApp>
        <TaskApp>
          <svg className="size-[36px]" viewBox="0 0 36 36">
            <path d="M18 18L2.400 9A18 18 0 0 1 33.600 9Z" fill="#e33b2e" />
            <path d="M18 18L33.600 9A18 18 0 0 1 18 36Z" fill="#fcc934" />
            <path d="M18 18L18 36A18 18 0 0 1 2.400 9Z" fill="#2ea24c" />
            <path d="M18 9H33.600L26 18Z" fill="#fcc934" /><path d="M18 9H33.600L30 6H12Z" fill="#e33b2e" /><path d="M10.200 22.500L2.400 9L14 12Z" fill="#2ea24c" /><path d="M25.800 22.500L18 36L16 26Z" fill="#fcc934" />
            <circle cx="18" cy="18" r="9" fill="#fff" /><circle cx="18" cy="18" r="7" fill="#3b7ded" />
          </svg>
        </TaskApp>
        <TaskApp active>
          <div className="flex size-[36px] items-center justify-center bg-[#3cb4e6] font-['Liberation_Sans',sans-serif] text-[19px] font-bold leading-none tracking-[-0.500px] text-white">MX</div>
        </TaskApp>
      </div>
      <div className="ml-auto flex items-center pr-[31px]">
        <svg className="h-[10px] w-[17px]" viewBox="0 0 17 10" fill="none" stroke="#fff" strokeWidth="2"><path d="M1 9L8.500 1.500L16 9" /></svg>
        <span className="ml-[27px] text-[23px] leading-none">中</span>
        <span className="ml-[34px] text-[23px] leading-none">拼</span>
        <svg className="ml-[34px] h-[20px] w-[24px]" viewBox="0 0 24 20" fill="none" stroke="#fff" strokeWidth="1.900">
          <path d="M1 8.500Q12 -4.500 23 8.500M4.500 11.500Q12 2.500 19.500 11.500M8 14.500Q12 9.500 16 14.500" /><circle cx="12" cy="16.500" r="2" fill="#fff" stroke="none" />
        </svg>
        <svg className="ml-[12px] h-[20px] w-[25px]" viewBox="0 0 25 20" fill="none" stroke="#fff" strokeWidth="1.700">
          <path d="M1 7H5L10 2V18L5 13H1Z" /><path d="M12.500 6.500Q15 10 12.500 13.500" /><path d="M16 4Q20 10 16 16M19.500 1.500Q26 10 19.500 18.500" stroke="#5a5a5a" />
        </svg>
        <svg className="ml-[11px] h-[20px] w-[24px]" viewBox="0 0 24 20">
          <rect x="1" y="4" width="18.500" height="14.500" rx="3" fill="none" stroke="#fff" strokeWidth="1.500" />
          <path d="M5 6.300H15.500Q17.200 6.300 17.200 8V14.500Q17.200 16.200 15.500 16.200H5Q3.300 16.200 3.300 14.500V8Z" fill="#fff" />
          <path d="M20.500 8.500H22.500Q23.500 11.200 22.500 14H20.500Z" fill="#fff" />
          <path d="M5 -1L-.500 8.500H3L2 13.500L9 5.500H5.800L8 -1Z" fill="#fff" stroke="#1c1c1c" strokeWidth="1.300" />
        </svg>
        <div className="mb-px ml-[20px] w-[88px] text-right text-[17.500px] leading-[24px] tracking-[-0.100px]">
          <p>15:16:29</p>
          <p>2024/5/31</p>
        </div>
        <svg className="ml-[13px] h-[24px] w-[20px]" viewBox="0 0 20 24" fill="#98e8ff">
          <path d="M2.500 15V8.500Q3 1 10 1T17.500 8.500V15L20 18V19H0V18ZM6 21H14Q12.500 24 10 24T6 21Z" />
        </svg>
      </div>
    </footer>
  );
}

export default function App() {
  return (
    <div className="flex h-[1438px] w-[2559px] flex-col overflow-hidden bg-white font-['Liberation_Sans',Arial,sans-serif]">
      <TitleBar />
      <Header />
      <Breadcrumb />
      <Tabs />
      <Toolbar />
      <main className="flex min-h-0 flex-1">
        <div className="w-[554px] shrink-0 pl-[16px] pt-[95px] text-center font-['Noto_Sans_CJK_SC',sans-serif] text-[56.200px] font-light leading-[76.300px] text-black [-webkit-text-stroke:0.8px_black]">
          <p>在绝大多</p>
          <p>数情况下</p>
          <p>时钟的配置只需将</p>
          <p>时钟频率拉到最大</p>
          <p className="font-['Open_Sans',sans-serif] font-normal tracking-[0.500px] [-webkit-text-stroke:0]">(72MHz)</p>
          <p>如右图所示</p>
        </div>
        <ClockTree />
      </main>
      <Taskbar />
    </div>
  );
}
